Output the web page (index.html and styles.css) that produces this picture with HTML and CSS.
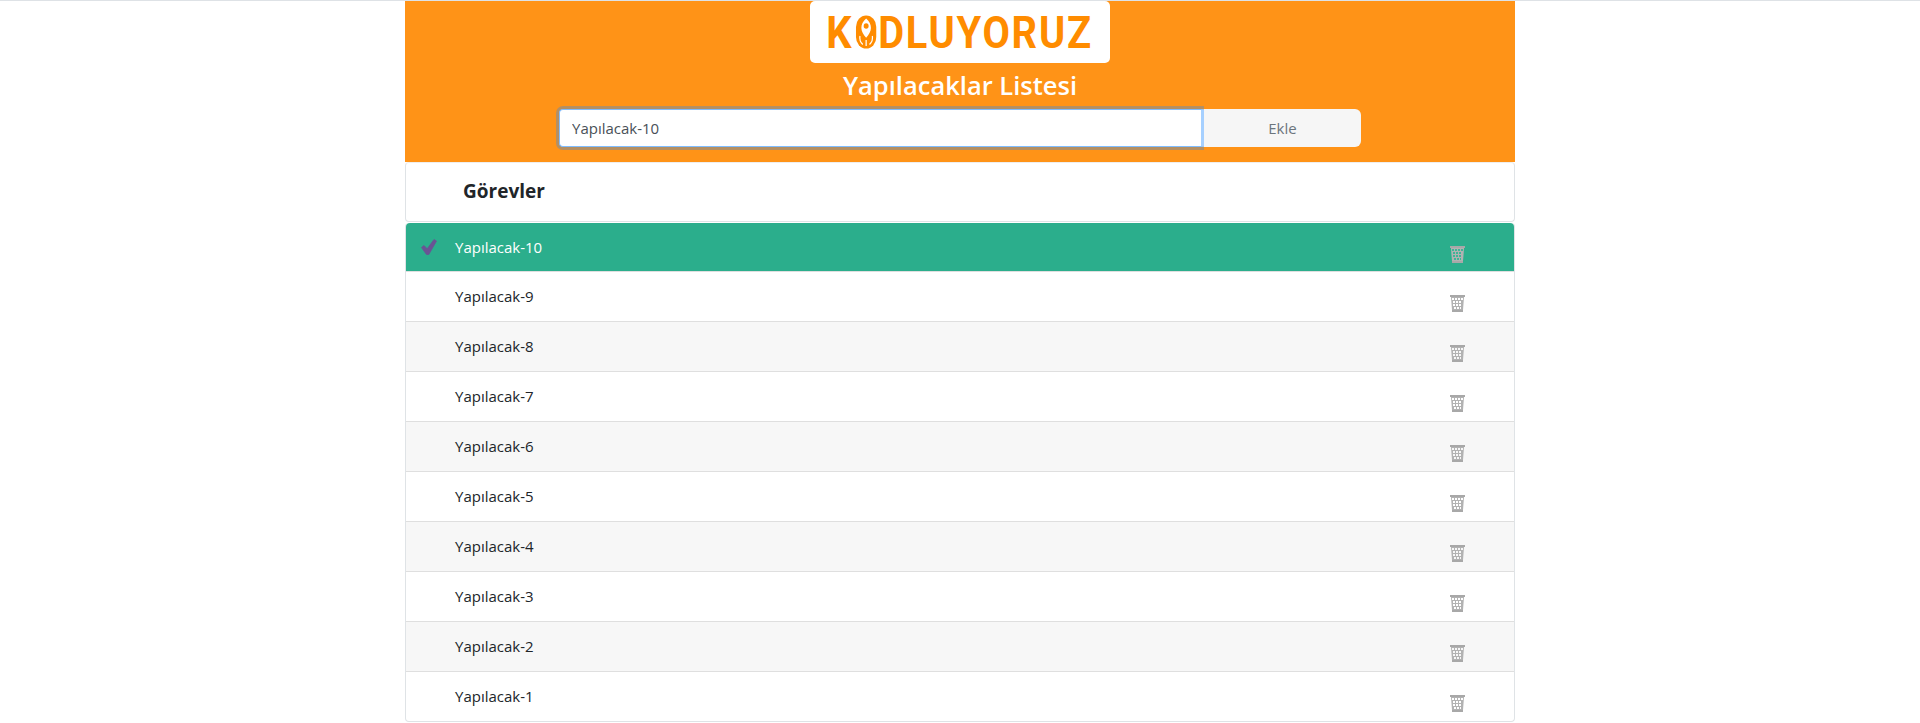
FILE: index.html
```html
<!DOCTYPE html>
<html lang="tr">

<head>
  <meta charset="UTF-8">
  <meta name="viewport" content="width=device-width, initial-scale=1.0">
  <title>Yapılacaklar Listesi</title>

  <link rel="stylesheet" href="styles.css">
</head>

<body>
  <div class="container">
    <header class="top">
      <div class="logo">
        <div class="logo-mark">
          <span>K</span>
          <svg class="logo-rocket" width="24" height="34" viewBox="0 0 24 34">
            <rect x="0.5" y="0.5" width="23" height="33" rx="11.500" fill="#ff8c00" />
            <path d="M12 3.500c3.800 3 5.400 6 5.400 9.500 0 3.200-2.400 6.800-5.400 9.800-3-3-5.400-6.600-5.400-9.800 0-3.500 1.600-6.500 5.400-9.500z" fill="#fff" />
            <circle cx="12" cy="11" r="2.800" fill="#ff8c00" />
            <path d="M5 21c-.6 3 .2 6 3.200 8.500M19 21c.6 3-.2 6-3.200 8.500M12 25v6" fill="none" stroke="#fff" stroke-width="1.400" />
          </svg>
          <span>DLUYORUZ</span>
        </div>
      </div>
      <h1 class="title">Yapılacaklar Listesi</h1>
      <form class="add-form">
        <input class="add-input" type="text" value="Yapılacak-10">
        <button class="add-btn" type="button">Ekle</button>
      </form>
    </header>

    <div class="tasks-head">
      <h2>Görevler</h2>
    </div>

    <ul class="tasks">
      <li class="task done">
        <svg class="check" width="18" height="18" viewBox="0 0 18 18">
          <path d="M1.500 9.500L4 7.500l3.200 3.300L14 1.500l2.500 1.500L8.800 16.500H6.500z" fill="#6a5394" stroke="#6a5394" stroke-width="0.800" stroke-linejoin="round" />
        </svg>
        <span class="task-name">Yapılacak-10</span>
        <svg class="trash"><use href="#trash-icon" /></svg>
      </li>
      <li class="task">
        <span class="task-name">Yapılacak-9</span>
        <svg class="trash"><use href="#trash-icon" /></svg>
      </li>
      <li class="task">
        <span class="task-name">Yapılacak-8</span>
        <svg class="trash"><use href="#trash-icon" /></svg>
      </li>
      <li class="task">
        <span class="task-name">Yapılacak-7</span>
        <svg class="trash"><use href="#trash-icon" /></svg>
      </li>
      <li class="task">
        <span class="task-name">Yapılacak-6</span>
        <svg class="trash"><use href="#trash-icon" /></svg>
      </li>
      <li class="task">
        <span class="task-name">Yapılacak-5</span>
        <svg class="trash"><use href="#trash-icon" /></svg>
      </li>
      <li class="task">
        <span class="task-name">Yapılacak-4</span>
        <svg class="trash"><use href="#trash-icon" /></svg>
      </li>
      <li class="task">
        <span class="task-name">Yapılacak-3</span>
        <svg class="trash"><use href="#trash-icon" /></svg>
      </li>
      <li class="task">
        <span class="task-name">Yapılacak-2</span>
        <svg class="trash"><use href="#trash-icon" /></svg>
      </li>
      <li class="task">
        <span class="task-name">Yapılacak-1</span>
        <svg class="trash"><use href="#trash-icon" /></svg>
      </li>
    </ul>
  </div>

  <svg class="sprite" width="0" height="0">
    <defs>
      <!-- wire basket: holes are cut out so the row colour shows through -->
      <symbol id="trash-icon" viewBox="0 0 17 17">
        <path fill="#fff" fill-opacity="0.1" d="M2 2h13l-1 13H3z" />
        <path fill="#b2b2b2" fill-rule="evenodd" d="M2 2h13l-1 13H3z
          M3 3h2v2H3z M6 3h2v2H6z M9 3h2v2H9z M12 3h2v2h-2z
          M4 6h2v2H4z M7 6h2v2H7z M10 6h2v2h-2z
          M4 9h2v2H4z M7 9h2v2H7z M10 9h2v2h-2z
          M5 12h2v2H5z M8 12h2v2H8z M11 12h1v2h-1z" />
        <rect x="1" y="0" width="15" height="2" fill="#a8a8a8" />
        <rect x="3" y="15" width="11" height="2" fill="#a8a8a8" />
      </symbol>
    </defs>
  </svg>
</body>

</html>
```

FILE: styles.css
```css
* {
  box-sizing: border-box;
}

body {
  margin: 0;
  border-top: 1px solid #dee2e6;
  background: #fff;
  color: #212529;
  font-family: "Open Sans", "Noto Sans", sans-serif;
  font-size: 16px;
}

.container {
  width: 1110px;
  margin-left: 405px;
}

.sprite {
  display: block;
}

.top {
  height: 161px;
  display: flex;
  flex-direction: column;
  align-items: center;
  background: #ff9317;
}

.logo {
  width: 300px;
  height: 62px;
  display: flex;
  align-items: center;
  justify-content: center;
  background: #fff;
  border-radius: 5px;
}

.logo-mark {
  display: flex;
  align-items: center;
  gap: 2px;
  transform: scaleX(0.885);
  color: #ff8c00;
  font-family: "Roboto", sans-serif;
  font-weight: 700;
  font-size: 45px;
  letter-spacing: 2px;
}

.logo-rocket {
  flex-shrink: 0;
}

.title {
  margin: 3px 0 0;
  color: #fff;
  font-size: 25.500px;
  line-height: 38px;
  font-weight: 600;
}

.add-form {
  display: flex;
  width: 802px;
  margin-top: 5px;
}

.add-input {
  width: 645px;
  height: 38px;
  padding: 6px 12px;
  border: 1px solid #80bdff;
  border-right: 3px solid #a6d0ff;
  border-radius: 4px 0 0 4px;
  outline: none;
  box-shadow: 0 0 0 3px rgba(130, 140, 150, 0.6);
  clip-path: inset(-3px 0 -3px -3px);
  background: #fff;
  color: #495057;
  font-family: inherit;
  font-size: 15px;
}

.add-btn {
  flex: 1;
  height: 38px;
  border: 0;
  border-radius: 0 6px 6px 0;
  background: #f6f6f6;
  color: #6c757d;
  font-family: inherit;
  font-size: 15px;
  cursor: pointer;
}

.tasks-head {
  height: 60px;
  display: flex;
  align-items: center;
  padding: 0 0 2px 57px;
  border: 1px solid #dfe3e6;
  border-top-color: #eee;
  border-radius: 4px;
}

.tasks-head h2 {
  margin: 0;
  font-size: 19px;
  font-weight: 700;
}

.tasks {
  margin: 1px 0 0;
  padding: 0;
  list-style: none;
  border: 1px solid #dfe3e6;
  border-top: 0;
  border-radius: 4px;
}

.task {
  position: relative;
  height: 50px;
  display: flex;
  align-items: center;
  padding: 0 0 2px 49px;
  border-top: 1px solid #dfdfdf;
  font-size: 15px;
}

.task:nth-child(odd) {
  background: #f7f7f7;
}

.task.done {
  height: 48px;
  padding-bottom: 1px;
  border-top: 0;
  border-radius: 4px 4px 0 0;
  background: #2bae8c;
  color: #fff;
}

.check {
  position: absolute;
  left: 14px;
  top: 15px;
}

.trash {
  width: 17px;
  height: 17px;
  margin-left: auto;
  margin-right: 48px;
  margin-top: 16px;
}
```
